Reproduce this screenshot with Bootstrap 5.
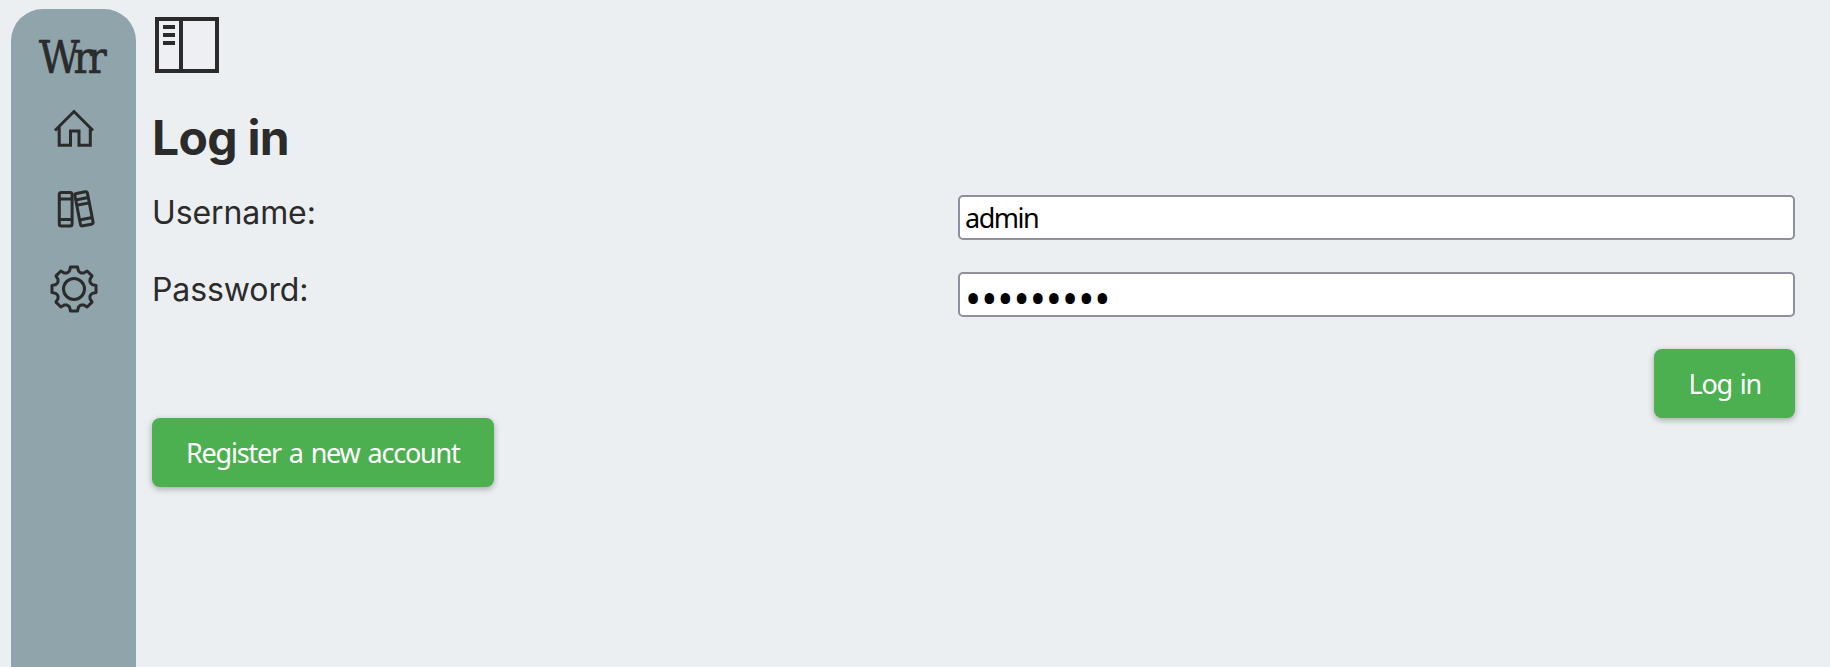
<!DOCTYPE html>
<html lang="en">
<head>
<meta charset="utf-8">
<meta name="viewport" content="width=device-width, initial-scale=1">
<title>Log in</title>
<link href="https://cdn.jsdelivr.net/npm/bootstrap@5.3.0/dist/css/bootstrap.min.css" rel="stylesheet">
<style>
body { background: #ebeff1; color: #2b2b2b; font-family: Inter, sans-serif; font-size: 32px; line-height: 38px; overflow: hidden; }
.side { width: 125px; margin: 9px 0 0 11px; background: #90a4ac; border-radius: 32px 32px 0 0; }
.side a { display: block; height: 80px; color: inherit; line-height: 0; }
.side .logo { height: 79px; padding-top: 27px; font: 44px/44px "DejaVu Serif", serif; letter-spacing: -5px; text-decoration: none; white-space: nowrap; padding-left: 28px; -webkit-text-stroke: .7px #2b2b2b; }
.logo span { display: inline-block; transform-origin: 0 50%; transform: scaleX(.9); }
.content { padding: 17px 35px 0 16px; }
.toggle { margin-left: 3px; width: 64px; height: 56px; }
h1 { font-size: 48px; line-height: 58px; font-weight: 700; margin: 36px 0 28px; letter-spacing: -.7px; }
.fields { display: grid; grid-template-columns: 806px 1fr; row-gap: 32px; }
.fields label { height: 45px; margin-top: -1px; letter-spacing: -.1px; }
.entry { height: 45px; padding: 0 5px; border: 2px solid #8f8f9d; border-radius: 5px; background: #fff; color: #000; font: 27px/38px "Noto Sans", sans-serif; letter-spacing: -1.5px; min-width: 0; }
.entry[type=password] { font-size: 43px; letter-spacing: 0; padding-top: 7px; }
.act { height: 69px; padding: 0 34px; border: 0; border-radius: 8px; background: #4caf50 !important; color: #fff !important; font: 27px/69px "Noto Sans", sans-serif; letter-spacing: -1.2px; word-spacing: 2px; box-shadow: 0 2px 6px rgba(0,0,0,.3); white-space: nowrap; }
</style>
</head>
<body>
<div class="d-flex vh-100">
  <nav class="side flex-shrink-0">
    <a class="logo" href="#"><span>Wrr</span></a>
    <a href="#" aria-label="Home"><svg width="125" height="80" fill="none" stroke="#2b2b2b" stroke-width="3"><path d="M44 42.500 63 23.500l19 19M48.200 39v18.300h11.300V43h8.500v14.300h11.300V39"/></svg></a>
    <a href="#" aria-label="Library"><svg width="125" height="80" fill="none" stroke="#2b2b2b" stroke-width="3"><rect x="48.300" y="24.500" width="12.800" height="33.500" rx="2"/><path d="M48.300 31h12.800M48.300 51.500h12.800"/><g transform="rotate(-11 73 41)"><rect x="66.600" y="24.300" width="12.800" height="33" rx="2"/><path d="M66.600 30.500h12.800M66.600 36h12.800M66.600 51h12.800"/></g></svg></a>
    <a href="#" aria-label="Settings"><svg width="125" height="90" fill="none" stroke="#2b2b2b" stroke-width="3" stroke-linejoin="round"><g transform="translate(63 41)"><circle r="10.500"/><path id="cog"/></g></svg></a>
  </nav>
  <main class="content flex-grow-1">
    <svg class="toggle d-block" viewBox="0 0 64 56"><path d="M2 2h60v52H2z" fill="#edeff3" stroke="#2b2b2b" stroke-width="4"/><path d="M26 2v52M8 10h12M8 18h12M8 26h12" stroke="#2b2b2b" stroke-width="4"/></svg>
    <h1>Log in</h1>
    <form class="fields">
      <label for="user">Username:</label><input class="entry w-100" id="user" value="admin">
      <label for="pass">Password:</label><input class="entry w-100" id="pass" type="password" value="password1">
      <button type="button" class="btn act" style="grid-column:2;justify-self:end">Log in</button>
    </form>
    <button type="button" class="btn act d-block">Register a new account</button>
  </main>
</div>
<script src="https://cdn.jsdelivr.net/npm/bootstrap@5.3.0/dist/js/bootstrap.bundle.min.js"></script>
<script>
// Eight rounded teeth around the settings wheel
const pts = [];
for (let i = 0; i < 8; i++) {
  [[-20, 17.6], [-13.5, 18.8], [-9, 22.3], [9, 22.3], [13.5, 18.8], [20, 17.6]].forEach(([a, r]) => {
    const t = (i * 45 + a) * Math.PI / 180;
    pts.push((r * Math.sin(t)).toFixed(2) + ',' + (-r * Math.cos(t)).toFixed(2));
  });
}
document.getElementById('cog').setAttribute('d', 'M' + pts.join('L') + 'Z');
</script>
</body>
</html>
